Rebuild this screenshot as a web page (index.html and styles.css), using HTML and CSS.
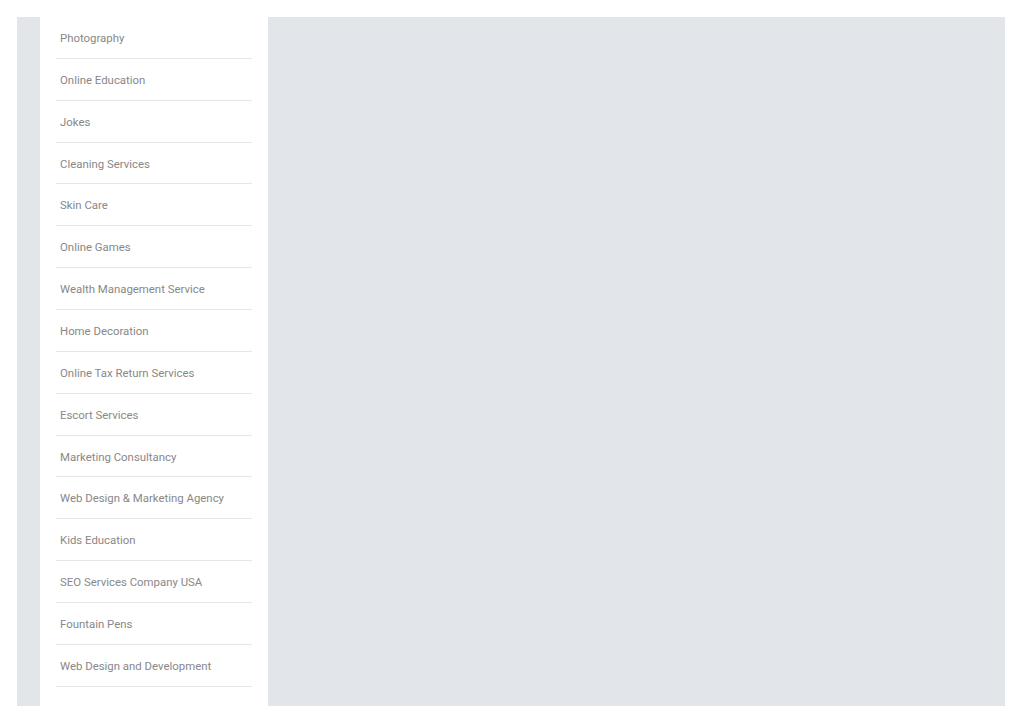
FILE: index.html
```html
<!DOCTYPE html>
<html lang="en">
<head>
    <meta charset="UTF-8">
    <meta name="viewport" content="width=device-width, initial-scale=1.0">
    <title>Categories</title>
    <link rel="stylesheet" href="styles.css">
</head>
<body>
    <div class="page">
        <div class="sidebar">
            <ul class="cat-list">
                <li><a href="#">Photography</a></li>
                <li><a href="#">Online Education</a></li>
                <li><a href="#">Jokes</a></li>
                <li><a href="#">Cleaning Services</a></li>
                <li><a href="#">Skin Care</a></li>
                <li><a href="#">Online Games</a></li>
                <li><a href="#">Wealth Management Service</a></li>
                <li><a href="#">Home Decoration</a></li>
                <li><a href="#">Online Tax Return Services</a></li>
                <li><a href="#">Escort Services</a></li>
                <li><a href="#">Marketing Consultancy</a></li>
                <li><a href="#">Web Design &amp; Marketing Agency</a></li>
                <li><a href="#">Kids Education</a></li>
                <li><a href="#">SEO Services Company USA</a></li>
                <li><a href="#">Fountain Pens</a></li>
                <li><a href="#">Web Design and Development</a></li>
            </ul>
        </div>
        <div class="content"></div>
    </div>
</body>
</html>
```

FILE: styles.css
```css
body {
    margin: 0;
    padding: 17px 19px 0 17px;
    font-family: Roboto, "Liberation Sans", Arial, sans-serif;
    background: #fff;
}

.page {
    display: flex;
    height: 689px;
    background: #e2e5e9;
    padding-left: 23px;
}

.sidebar {
    width: 196px;
    background: #fff;
    padding: 0 16px;
}

.cat-list {
    list-style: none;
    margin: 0;
    padding: 0;
}

.cat-list li {
    height: 40.87px;
    border-bottom: 1px solid #e6e6e6;
    display: flex;
    align-items: center;
}

.cat-list a {
    padding: 1px 0 0 4px;
    font-size: 11.4px;
    color: #888888;
    text-decoration: none;
}

.content {
    flex: 1;
}
```
